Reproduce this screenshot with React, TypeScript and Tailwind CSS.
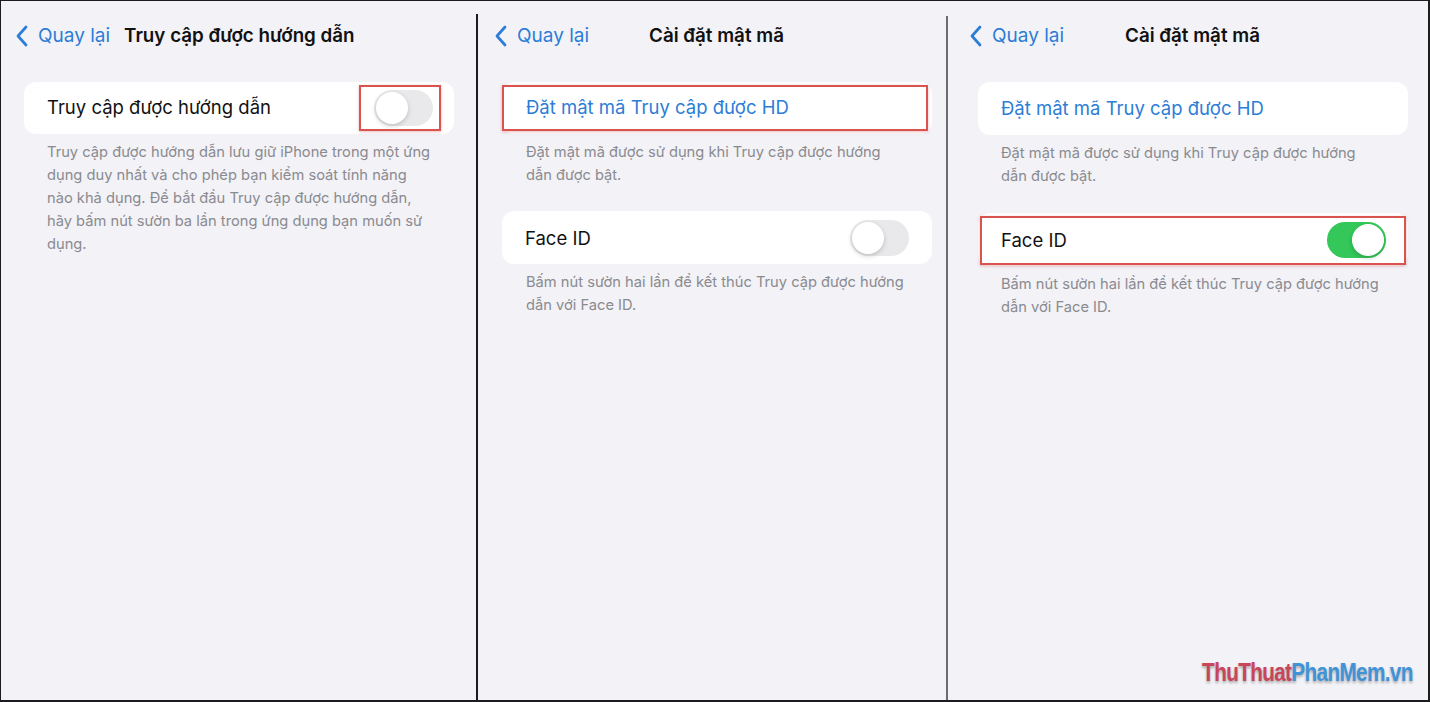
import React from "react";

const FONT = { fontFamily: 'Inter, "Noto Sans", "Liberation Sans", sans-serif' };

function Chevron() {
  return (
    <svg width="14" height="22" viewBox="0 0 14 22" fill="none">
      <path d="M11 2 L3 11 L11 20" stroke="#2c7dd6" strokeWidth="2.7" strokeLinecap="round" strokeLinejoin="round" />
    </svg>
  );
}

function Toggle({ on }: { on?: boolean }) {
  return (
    <div
      className={`relative w-[59px] h-[36px] rounded-full ${on ? "bg-[#34c759]" : "bg-[#e9e9eb]"}`}
    >
      <div
        className={`absolute top-[2px] w-[32px] h-[32px] rounded-full bg-white shadow-[0_2px_5px_rgba(0,0,0,0.18)] ${
          on ? "right-[2px]" : "left-[2px]"
        }`}
      />
    </div>
  );
}

function Footer({ lines, className }: { lines: string[]; className?: string }) {
  return (
    <div className={`text-[14.7px] leading-[23px] text-[#8a8a8f] ${className ?? ""}`}>
      {lines.map((l, i) => (
        <div key={i} className="whitespace-nowrap">
          {l}
        </div>
      ))}
    </div>
  );
}

function Back() {
  return (
    <div className="flex items-center gap-[9px] text-[19px] text-[#2c7dd6]">
      <Chevron />
      <span>Quay lại</span>
    </div>
  );
}

export default function App() {
  return (
    <div
      style={FONT}
      className="w-[1430px] h-[702px] bg-[#f2f2f7] border-t border-l border-r-2 border-b-2 border-[#1c1c1e] flex overflow-hidden"
    >
      {/* Panel 1 */}
      <div className="w-[475px] shrink-0 flex flex-col">
        <div className="flex items-center h-[36px] mt-[17px] pl-[14px]">
          <Back />
          <span className="ml-[14px] text-[18.8px] font-semibold text-[#111]">Truy cập được hướng dẫn</span>
        </div>
        <div className="relative mt-[28px] ml-[23px] w-[430px] h-[52px] bg-white rounded-[12px] flex items-center justify-between pl-[23px] pr-[21px]">
          <span className="text-[18.5px] text-[#111]">Truy cập được hướng dẫn</span>
          <Toggle />
          <div className="absolute left-[335px] top-[3px] w-[82px] h-[46px] border-2 border-[#d9534f] shadow-[0_1px_3px_rgba(200,60,60,0.35)]" />
        </div>
        <Footer
          className="mt-[7px] ml-[46px]"
          lines={[
            "Truy cập được hướng dẫn lưu giữ iPhone trong một ứng",
            "dụng duy nhất và cho phép bạn kiểm soát tính năng",
            "nào khả dụng. Để bắt đầu Truy cập được hướng dẫn,",
            "hãy bấm nút sườn ba lần trong ứng dụng bạn muốn sử",
            "dụng.",
          ]}
        />
      </div>
      <div className="w-[2px] shrink-0 mt-[13px] bg-[#1c1c1e]" />

      {/* Panel 2 */}
      <div className="w-[468px] shrink-0 flex flex-col">
        <div className="flex items-center h-[36px] mt-[17px] pl-[16px]">
          <Back />
          <span className="ml-[60px] text-[18.8px] font-semibold text-[#111]">Cài đặt mật mã</span>
        </div>
        <div className="relative mt-[28px] ml-[24px] w-[430px] h-[52px] bg-white rounded-[12px] flex items-center pl-[24px]">
          <span className="text-[18.5px] text-[#2c7dd6]">Đặt mật mã Truy cập được HD</span>
          <div className="absolute left-0 top-[3px] w-[426px] h-[46px] border-2 border-[#d9534f] shadow-[0_1px_3px_rgba(200,60,60,0.35)]" />
        </div>
        <Footer
          className="mt-[7px] ml-[48px]"
          lines={["Đặt mật mã được sử dụng khi Truy cập được hướng", "dẫn được bật."]}
        />
        <div className="mt-[24px] ml-[24px] w-[430px] h-[53px] bg-white rounded-[12px] flex items-center justify-between pl-[23px] pr-[23px]">
          <span className="text-[18.5px] text-[#111] pt-[3px]">Face ID</span>
          <Toggle />
        </div>
        <Footer
          className="mt-[7px] ml-[48px]"
          lines={["Bấm nút sườn hai lần để kết thúc Truy cập được hướng", "dẫn với Face ID."]}
        />
      </div>
      <div className="w-[2px] shrink-0 mt-[15px] bg-[#6b6b70]" />

      {/* Panel 3 */}
      <div className="relative flex-1 flex flex-col">
        <div className="flex items-center h-[36px] mt-[17px] pl-[21px]">
          <Back />
          <span className="ml-[61px] text-[18.8px] font-semibold text-[#111]">Cài đặt mật mã</span>
        </div>
        <div className="mt-[28px] ml-[30px] w-[430px] h-[53px] bg-white rounded-[12px] flex items-center pl-[23px]">
          <span className="text-[18.5px] text-[#2c7dd6]">Đặt mật mã Truy cập được HD</span>
        </div>
        <Footer
          className="mt-[7px] ml-[53px]"
          lines={["Đặt mật mã được sử dụng khi Truy cập được hướng", "dẫn được bật."]}
        />
        <div className="relative mt-[25px] ml-[30px] w-[430px] h-[53px] bg-white rounded-[12px] flex items-center justify-between pl-[23px] pr-[22px]">
          <span className="text-[18.5px] text-[#111] pt-[2px]">Face ID</span>
          <Toggle on />
          <div className="absolute left-[2px] top-[3px] w-[426px] h-[49px] border-2 border-[#d9534f] shadow-[0_1px_3px_rgba(200,60,60,0.35)]" />
        </div>
        <Footer
          className="mt-[7px] ml-[53px]"
          lines={["Bấm nút sườn hai lần để kết thúc Truy cập được hướng", "dẫn với Face ID."]}
        />
        <div
          className="absolute right-[15px] bottom-[9px] origin-right scale-x-[0.83] text-[25px] font-bold tracking-[-0.8px] [text-shadow:0_2px_3px_rgba(0,0,0,0.3)]"
          style={{ fontFamily: '"Liberation Sans", Arial, sans-serif' }}
        >
          <span className="text-[#c8455a]">ThuThuat</span>
          <span className="text-[#3f93d6]">PhanMem.vn</span>
        </div>
      </div>
    </div>
  );
}
